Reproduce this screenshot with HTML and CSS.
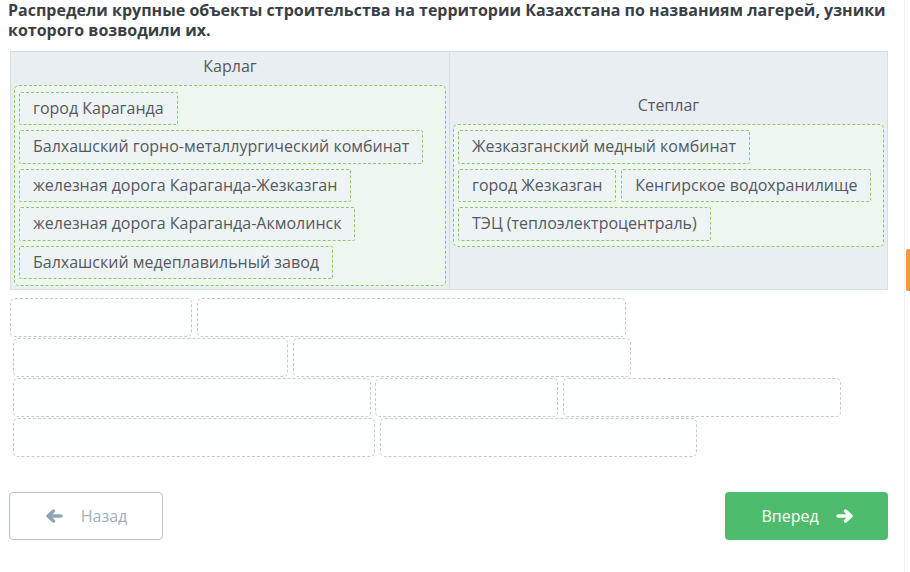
FILE: index.html
```html
<!DOCTYPE html>
<html lang="ru">
<head>
<meta charset="utf-8">
<title>Лагеря</title>
<link rel="stylesheet" href="styles.css">
</head>
<body>
<div class="page">
  <h1 class="question">Распредели крупные объекты строительства на территории Казахстана по названиям лагерей, узники которого возводили их.</h1>
  <div class="board">
    <div class="col col-left">
      <div class="col-title">Карлаг</div>
      <div class="zone zone-left">
        <div class="chip">город Караганда</div>
        <div class="chip">Балхашский горно-металлургический комбинат</div>
        <div class="chip">железная дорога Караганда-Жезказган</div>
        <div class="chip">железная дорога Караганда-Акмолинск</div>
        <div class="chip">Балхашский медеплавильный завод</div>
      </div>
    </div>
    <div class="col col-right">
      <div class="col-title">Степлаг</div>
      <div class="zone zone-right">
        <div class="chip">Жезказганский медный комбинат</div>
        <div class="chip">город Жезказган</div>
        <div class="chip">Кенгирское водохранилище</div>
        <div class="chip">ТЭЦ (теплоэлектроцентраль)</div>
      </div>
    </div>
  </div>
  <div class="slots">
    <div class="slot-row row-first">
      <div class="slot w181"></div>
      <div class="slot w429"></div>
    </div>
    <div class="slot-row">
      <div class="slot w274"></div>
      <div class="slot w337"></div>
    </div>
    <div class="slot-row">
      <div class="slot w358"></div>
      <div class="slot w183 g4"></div>
      <div class="slot w277"></div>
    </div>
    <div class="slot-row">
      <div class="slot w361"></div>
      <div class="slot w316"></div>
    </div>
  </div>
  <div class="nav">
    <button class="btn btn-back">
      <svg class="arrow" width="18" height="14" viewBox="0 0 18 14"><path d="M16 7H4M8.5 2L3 7l5.5 5" fill="none" stroke="currentColor" stroke-width="3.4" stroke-linecap="round" stroke-linejoin="round"/></svg>
      <span>Назад</span>
    </button>
    <button class="btn btn-next">
      <span>Вперед</span>
      <svg class="arrow" width="18" height="14" viewBox="0 0 18 14"><path d="M2 7h12M9.5 2L15 7l-5.5 5" fill="none" stroke="currentColor" stroke-width="3.4" stroke-linecap="round" stroke-linejoin="round"/></svg>
    </button>
  </div>
</div>
<div class="edge"></div>
<div class="edge-tab"></div>
</body>
</html>
```
FILE: styles.css
```css
html, body {
  margin: 0;
  padding: 0;
  background: #ffffff;
}
body {
  font-family: "Open Sans", "Liberation Sans", sans-serif;
  color: #555a5e;
  width: 910px;
  height: 572px;
  overflow: hidden;
}
.page {
  padding: 0 0 0 8px;
  width: 890px;
}
.question {
  margin: 0;
  font-size: 16px;
  line-height: 20px;
  font-weight: 700;
  color: #3a3f43;
  width: 882px;
}
.board {
  margin: 11px 0 0 2px;
  width: 876px;
  display: flex;
  background: #e8eef2;
  border: 1px solid #d7dfe3;
}
.col {
  padding: 3px 3px;
  display: flex;
  flex-direction: column;
}
.col-left {
  width: 432px;
  border-right: 1px solid #d7dfe3;
}
.col-right {
  flex: 1;
  justify-content: center;
}
.col-title {
  text-align: center;
  font-size: 16px;
  line-height: 22px;
  margin-bottom: 8px;
  color: #555a5e;
}
.zone {
  background: #edf7ef;
  border: 1px dashed #8fc86a;
  border-radius: 5px;
  display: flex;
  flex-wrap: wrap;
  align-content: flex-start;
  align-items: flex-start;
  gap: 5px;
}
.zone-left {
  padding: 5.5px 4px;
  flex-direction: column;
}
.zone-right {
  padding: 5px 4px;
}
.chip {
  background: #eef3f6;
  border: 1px dashed #8fc86a;
  border-radius: 2px;
  padding: 5px 13px;
  font-size: 16px;
  line-height: 21.5px;
  white-space: nowrap;
  color: #555a5e;
}
.slots {
  margin-top: 8px;
  padding-left: 5px;
  display: flex;
  flex-direction: column;
  gap: 1px;
}
.slot-row {
  display: flex;
  gap: 5px;
}
.row-first {
  margin-left: -3px;
  gap: 5px;
}
.slot {
  height: 37px;
  border: 1px dashed #c3ccd1;
  border-radius: 5px;
  background: #fdfefe;
}
.w181 { width: 180px; }
.w429 { width: 427px; }
.w274 { width: 273px; }
.w337 { width: 336px; }
.w358 { width: 356px; }
.w183 { width: 181px; }
.w277 { width: 276px; }
.w361 { width: 360px; }
.w316 { width: 315px; }
.g4 { margin-left: -1px; }
.nav {
  margin-top: 35px;
  display: flex;
  justify-content: space-between;
  width: 880px;
}
.btn {
  height: 48px;
  border-radius: 4px;
  font-family: "Open Sans", "Liberation Sans", sans-serif;
  font-size: 16px;
  display: flex;
  align-items: center;
  justify-content: center;
  cursor: pointer;
  padding: 0;
}
.btn-back {
  margin-left: 1px;
  width: 154px;
  background: #ffffff;
  border: 1px solid #b6c2ca;
  color: #9fb0bc;
  gap: 18px;
}
.btn-back .arrow {
  color: #90a4b2;
}
.btn-next {
  width: 163px;
  background: #4dbd6d;
  border: none;
  color: #ffffff;
  gap: 17px;
  padding-left: 2px;
}
.edge {
  position: absolute;
  left: 904px;
  top: 0;
  width: 1px;
  height: 572px;
  background: #eef0f1;
}
.edge-tab {
  position: absolute;
  left: 906px;
  top: 249px;
  width: 4px;
  height: 42px;
  background: #f29a3d;
  border-radius: 2px 0 0 2px;
}
```
